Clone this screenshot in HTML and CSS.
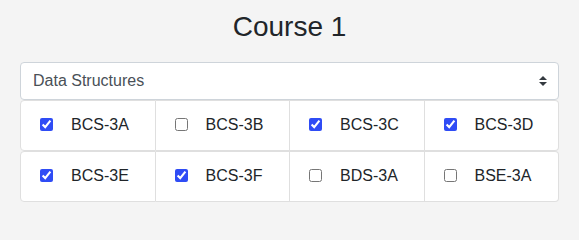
FILE: index.html
```html
<!DOCTYPE html>
<html lang="en">
<head>
<meta charset="utf-8">
<title>Course 1</title>
<link rel="stylesheet" href="styles.css">
</head>
<body>
<div class="container">
  <h3 class="title">Course 1</h3>
  <div class="select-wrap">
    <select class="course-select">
      <option>Data Structures</option>
    </select>
    <svg class="select-arrow" width="8" height="10" viewBox="0 0 4 5" aria-hidden="true"><path fill="#343a40" d="M2 0L0 2h4zm0 5L0 3h4z"/></svg>
  </div>
  <div class="section-list">
    <div class="section-row">
      <label class="cell"><input type="checkbox" checked><span class="name">BCS-3A</span></label>
      <label class="cell"><input type="checkbox"><span class="name">BCS-3B</span></label>
      <label class="cell"><input type="checkbox" checked><span class="name">BCS-3C</span></label>
      <label class="cell"><input type="checkbox" checked><span class="name">BCS-3D</span></label>
    </div>
    <div class="section-row">
      <label class="cell"><input type="checkbox" checked><span class="name">BCS-3E</span></label>
      <label class="cell"><input type="checkbox" checked><span class="name">BCS-3F</span></label>
      <label class="cell"><input type="checkbox"><span class="name">BDS-3A</span></label>
      <label class="cell"><input type="checkbox"><span class="name">BSE-3A</span></label>
    </div>
  </div>
</div>
</body>
</html>
```

FILE: styles.css
```css
html, body {
  margin: 0;
  padding: 0;
}
body {
  background: #f4f4f4;
  font-family: "Liberation Sans", Arial, Helvetica, sans-serif;
  color: #212529;
  font-size: 16px;
}
.container {
  padding: 0 20px;
}
.title {
  margin: 10px 0 18px;
  font-size: 28px;
  line-height: 34px;
  font-weight: 500;
  text-align: center;
  color: #212529;
}
.select-wrap {
  position: relative;
}
.course-select {
  display: block;
  width: 100%;
  height: 38px;
  box-sizing: border-box;
  margin: 0;
  padding: 6px 28px 6px 12px;
  font-family: inherit;
  font-size: 16px;
  line-height: 24px;
  color: #495057;
  background: #fff;
  border: 1px solid #ced4da;
  border-radius: 4px;
  -webkit-appearance: none;
  appearance: none;
  outline: none;
}
.select-arrow {
  position: absolute;
  right: 12px;
  top: 14px;
  pointer-events: none;
}
.section-row {
  display: flex;
}
.cell {
  flex: 1 1 0;
  display: flex;
  align-items: center;
  min-width: 0;
  padding: 12px 20px 13px;
  line-height: 24px;
  background: #fff;
  border: 1px solid #dfdfdf;
  border-left-width: 0;
}
.cell:first-child {
  border-left-width: 1px;
  border-radius: 4px 0 0 4px;
}
.cell:last-child {
  border-radius: 0 4px 4px 0;
}
.cell input {
  width: 13px;
  height: 13px;
  margin: 0 0 2px -1px;
  accent-color: #2f4cf5;
  flex: none;
}
.name {
  margin-left: 18px;
}
```
